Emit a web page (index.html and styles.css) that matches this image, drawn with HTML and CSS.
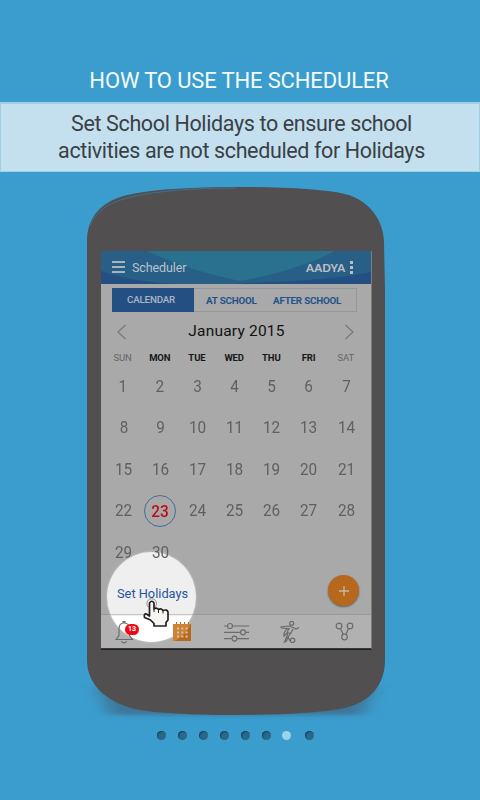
FILE: index.html
```html
<!DOCTYPE html>
<html lang="en">
<head>
<meta charset="utf-8">
<title>How to use the scheduler</title>
<link rel="stylesheet" href="styles.css">
</head>
<body>
<main class="page">
  <h1 class="title"><span>HOW TO USE THE SCHEDULER</span></h1>
  <p class="banner"><span class="line-a">Set School Holidays to ensure school</span><br><span class="line-b">activities are not scheduled for Holidays</span></p>
  <div class="phone">
    <svg class="shell" width="340" height="560" viewBox="0 0 340 560">
      <defs>
        <filter id="soft" x="-20%" y="-100%" width="140%" height="300%"><feGaussianBlur stdDeviation="9 2"/></filter>
      </defs>
      <path d="M28 506Q166 530 304 506L292 535H40Z" fill="#40617a" opacity=".65" filter="url(#soft)"/>
      <path d="M17 62C17 37 31 20 62 14C88 9 122 7 166 7C215 7 252 9 275 14C300 20 314 42 314 62L315 110V480C315 507 298 524 270 529C245 533 210 535 165 535C120 535 85 533 65 529C34 521 17 503 17 480Z" fill="#524f50"/>
      <path d="M20 46C27 27 47 18 82 13C112 9 140 8 166 8" fill="none" stroke="#35789c" stroke-width="1" opacity=".8"/>
    </svg>
    <div class="screen">
      <header class="appbar">
        <svg class="waves" width="270" height="33" viewBox="0 0 270 33">
          <rect width="270" height="33" fill="#285f87"/>
          <path d="M46 0C74 13 105 23 139 30C175 23 205 15 234 0Z" fill="#29718f"/>
          <path d="M0 20C22 27 40 31 76 33H0ZM132 33C185 30 235 29 270 21V33Z" fill="#244f83"/>
        </svg>
        <span class="burger"><i></i><i></i><i></i></span>
        <span class="appname">Scheduler</span>
        <span class="child">AADYA</span>
        <span class="dots"><i></i><i></i><i></i></span>
      </header>
      <div class="tabs"><b class="on">CALENDAR</b><b class="at">AT SCHOOL</b><b class="after">AFTER SCHOOL</b></div>
      <div class="month">
        <svg width="10" height="16" viewBox="0 0 10 16"><path d="M8.5 1L1 8L8.5 15"/></svg>
        <span>January 2015</span>
        <svg width="10" height="16" viewBox="0 0 10 16"><path d="M1.5 1L9 8L1.5 15"/></svg>
      </div>
      <div class="week"><span class="dim">SUN</span><span>MON</span><span>TUE</span><span>WED</span><span>THU</span><span>FRI</span><span class="dim">SAT</span></div>
      <div class="days">
        <span class="sh-l">1</span><span class="sh-l">2</span><span>3</span><span>4</span><span>5</span><span>6</span><span>7</span>
        <span class="sh-r">8</span><span>9</span><span>10</span><span>11</span><span>12</span><span>13</span><span>14</span>
        <span>15</span><span>16</span><span>17</span><span>18</span><span>19</span><span>20</span><span>21</span>
        <span>22</span><span class="today"><b>23</b></span><span>24</span><span>25</span><span>26</span><span>27</span><span>28</span>
        <span>29</span><span>30</span>
      </div>
      <div class="spot"></div>
      <div class="holidays">Set Holidays</div>
      <div class="fab"><svg width="12" height="12" viewBox="0 0 12 12"><path d="M6 1V11M1 6H11"/></svg></div>
      <svg class="nav" width="270" height="34" viewBox="0 0 270 34">
        <g fill="none" stroke="#6b6b6b" stroke-width="1.2">
          <path d="M15 24.500L18 20.500V14C18 9.500 20 8 23 8C26 8 28.500 9.500 28.500 14V20.500L31.500 24.500ZM22 8V6.500H24V8M20.500 26C21 28.500 25 28.500 25.500 26"/>
          <path d="M123 11H126.500M132 11H148M123 17.300H139M145 17.300H148M123 23.600H130.500M136 23.600H148"/>
          <circle cx="129" cy="11" r="2.500"/><circle cx="142" cy="17.300" r="2.500"/><circle cx="133.500" cy="23.600" r="2.500"/>
          <circle cx="190.700" cy="8.300" r="2"/><circle cx="191.600" cy="25.300" r="2.200"/>
          <path d="M179 12L188 11L192 12.500L195 14L198 12.500M180 13L186 13.500L183 18V21L186 18M186 13.500L189 14M192 14L190 18L187 22L189 26M187 18L185.500 22L183.500 27L185.500 26L187 22M188 13L186 18L190 18"/>
          <circle cx="238" cy="11" r="2.800"/><circle cx="249" cy="11" r="2.800"/><circle cx="243.500" cy="22" r="2.800"/>
          <path d="M239.500 13.500L242.200 19.500M247.500 13.500L244.800 19.500"/>
        </g>
        <path d="M72 9H75V7H76V9H79V7H80V9H83V7H84V9H87V7H88V9H90V26H72Z" fill="#b8681c"/>
        <path d="M72 9H89C87 16 81 22 74 26H72Z" fill="#ce8233"/>
        <path d="M76 13.500H87M76 17.500H87M76 21.500H87" stroke="#d5c3ad" stroke-width="2" stroke-dasharray="2 2.300"/>
      </svg>
      <div class="badge">13</div>
      <svg class="hand" width="29" height="32" viewBox="0 0 29 32">
        <circle cx="9.700" cy="5.500" r="4.800" fill="#f4f4f4" stroke="#8d8d8d"/>
        <path d="M7.500 5Q9.700 1.500 12 5V11Q14 9 16.500 11.500Q19 10 21 12.500Q25 11 26 14V22L24 24.500V28H12V25.500L8.500 22L2.500 19.500Q1.500 15.500 4.500 16L7.500 18Z" fill="#f7f6f2" stroke="#242021" stroke-width="1.700" stroke-linejoin="round"/>
        <path d="M12 11V14M16.500 11.500V15M21 12.500V15.500" stroke="#242021"/>
      </svg>
    </div>
  </div>
  <nav class="pager"><i></i><i></i><i></i><i></i><i></i><i></i><i class="active"></i><i></i></nav>
</main>
</body>
</html>
```
FILE: styles.css
```css
* { box-sizing: border-box; }
body { margin: 0; font-family: Roboto, sans-serif; }
.page { width: 480px; height: 800px; background: #3b9dce; overflow: hidden; display: flex; flex-direction: column; align-items: center; }
.title { margin: 0; padding-top: 67px; height: 102px; font-size: 22px; line-height: 28px; font-weight: 400; letter-spacing: -.14px; color: #f4fafd; white-space: nowrap; transform: translateX(-1px); }
.banner { margin: 0; width: 480px; height: 70px; padding: 6px 0 0 3px; background: #c4e0ee; border: 1px solid #a0cfe6; border-width: 2px 1px 1px; text-align: center; font-size: 21.5px; letter-spacing: -.37px; line-height: 27px; color: #3a4046; white-space: nowrap; }
.phone { width: 340px; height: 559px; position: relative; padding: 79px 0 0 31px; }
.shell { position: absolute; left: 0; top: 8px; }
.screen { width: 271px; height: 399px; position: relative; background: #a9a9a9; border-right: 1px solid #777f86; border-bottom: 2px solid #222; }
.appbar { height: 33px; position: relative; display: flex; align-items: center; padding-left: 11px; color: #b9c4cc; border-bottom: 1px solid #244b76; }
.waves { position: absolute; left: 0; top: 0; }
.burger, .dots { position: relative; display: flex; flex-direction: column; gap: 3px; }
.burger i { width: 13px; height: 2px; background: #a9b4bd; }
.appname { position: relative; margin-left: 7px; font-size: 12.5px; letter-spacing: -.1px; width: 173px; }
.child { position: relative; font: 900 11.3px Lato, sans-serif; letter-spacing: .2px; width: 45px; padding-left: 1px; color: #b8bec3; }
.dots { gap: 2px; }
.dots i { width: 3px; height: 3px; background: #b8bec3; }
.tabs { margin: 4px 14px 0 11px; height: 24px; border: 1px solid #9297a1; display: flex; align-items: center; font-size: 9.8px; letter-spacing: -.2px; color: #24528a; white-space: nowrap; }
.tabs b { font-weight: 700; }
.tabs .on { background: #244f83; width: 82px; height: 24px; line-height: 24px; margin-left: -1px; padding-left: 15px; color: #a8b6c7; font-weight: 500; }
.tabs .at { margin-left: 12px; width: 67px; }
.month { margin-top: 8px; height: 22px; padding: 0 17px 0 16px; display: flex; align-items: center; justify-content: space-between; font-size: 15.5px; color: #111; letter-spacing: .2px; }
.month span { padding-left: 2px; }
.month svg { fill: none; stroke: #777; stroke-width: 1.2; margin-top: 2px; }
.week { margin: 9px 6px 0 3px; height: 14px; display: grid; grid-template-columns: repeat(7, 37.2px); text-align: center; font-size: 9.5px; line-height: 14px; font-weight: 700; letter-spacing: -.1px; color: #161616; }
.week .dim { font-weight: 400; color: #666; }
.days { position: relative; z-index: 1; margin-left: 3.5px; padding-top: 1px; display: grid; grid-template-columns: repeat(7, 37.2px); grid-auto-rows: 41.4px; line-height: 41.4px; text-align: center; font-size: 17px; color: #606060; }
.days span { transform: scaleX(.9); }
.days .sh-l { padding-right: 2px; }
.days .sh-r { padding-left: 1px; }
.days .today { width: 32px; height: 32px; line-height: 30px; align-self: center; justify-self: center; border: 1px solid #3c719d; border-radius: 50%; color: #bd0c14; transform: none; }
.today b { display: block; font-weight: 500; transform: scaleX(.9); }
.spot { position: absolute; left: 6px; top: 301px; width: 89px; height: 90px; border-radius: 50%; background: linear-gradient(#efefef 64px, #fff 64px); box-shadow: 0 0 2px #ddd; }
.holidays { position: absolute; left: 16px; top: 334px; font-size: 12.8px; line-height: 17px; color: #1e559b; white-space: nowrap; }
.fab { position: absolute; left: 227px; top: 324px; width: 31px; height: 31px; border-radius: 50%; background: #b8681c; box-shadow: 0 1px 2px #57616a; display: flex; align-items: center; justify-content: center; }
.fab svg { stroke: #c5b8a9; stroke-width: 1.3; }
.nav { position: absolute; left: 0; top: 363px; box-sizing: content-box; border-top: 1px solid rgba(100, 100, 100, .3); background: rgba(255, 255, 255, .1); }
.badge { position: absolute; left: 24px; top: 373px; width: 14px; height: 11px; border-radius: 6px; background: #f40714; color: #fff; font-size: 7px; line-height: 11px; text-align: center; font-weight: 700; }
.hand { position: absolute; left: 41px; top: 347px; }
.pager { position: relative; width: 158px; margin-right: 9px; display: flex; justify-content: space-between; }
.pager i { width: 9px; height: 9px; border-radius: 50%; background: #296889; box-shadow: inset 1px 1px 1px #194863; }
.pager .active { background: #9bd2ec; box-shadow: none; margin: 0 2px 0 -1px; }
```
